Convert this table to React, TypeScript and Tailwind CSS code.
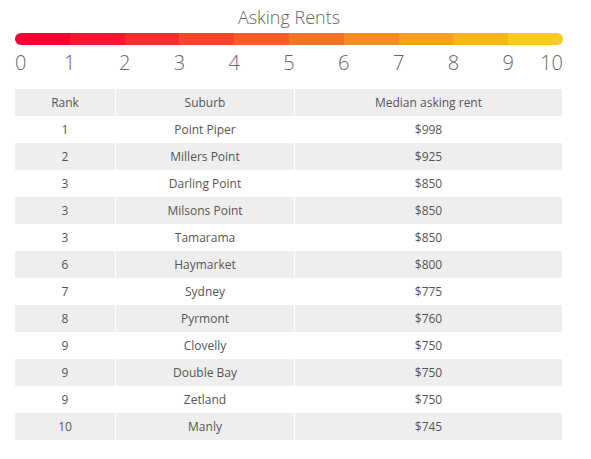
const segments = [
  "#f80132",
  "#f5172f",
  "#f42e2c",
  "#f4462a",
  "#f45d27",
  "#f47425",
  "#f58b23",
  "#f6a121",
  "#f7b620",
  "#f9ca21",
];

const rows = [
  ["1", "Point Piper", "$998"],
  ["2", "Millers Point", "$925"],
  ["3", "Darling Point", "$850"],
  ["3", "Milsons Point", "$850"],
  ["3", "Tamarama", "$850"],
  ["6", "Haymarket", "$800"],
  ["7", "Sydney", "$775"],
  ["8", "Pyrmont", "$760"],
  ["9", "Clovelly", "$750"],
  ["9", "Double Bay", "$750"],
  ["9", "Zetland", "$750"],
  ["10", "Manly", "$745"],
];

function Row({ cells, shaded }: { cells: string[]; shaded: boolean }) {
  const bg = shaded ? "bg-[#eeeeee]" : "bg-white";
  return (
    <div className="grid grid-cols-[100px_178px_267px] gap-x-px h-[27px]">
      {cells.map((c, i) => (
        <div key={i} className={`${bg} flex items-center justify-center`}>
          {c}
        </div>
      ))}
    </div>
  );
}

export default function App() {
  return (
    <div className="w-[591px] h-[459px] bg-white font-['Open_Sans',sans-serif] px-[15px] pt-[5px]">
      <div className="w-[548px] text-center text-[18px] leading-[24px] font-light text-[#666666]">
        Asking Rents
      </div>

      <div className="mt-[4px] w-[548px] h-[12px] rounded-full overflow-hidden flex">
        {segments.map((c) => (
          <div key={c} className="flex-1 h-full" style={{ backgroundColor: c }} />
        ))}
      </div>

      <div className="relative mt-[6px] w-[548px] h-[24px] text-[20px] leading-[24px] font-light text-[#666666]">
        {Array.from({ length: 11 }, (_, k) => {
          if (k === 0) return <span key={k} className="absolute left-0 top-0">0</span>;
          if (k === 10) return <span key={k} className="absolute right-0 top-0">10</span>;
          return (
            <span
              key={k}
              className="absolute top-0 -translate-x-1/2"
              style={{ left: `${k * 10}%` }}
            >
              {k}
            </span>
          );
        })}
      </div>

      <div className="mt-[14px] w-[547px] text-[12px] text-[#555555]">
        <Row cells={["Rank", "Suburb", "Median asking rent"]} shaded />
        {rows.map((r, i) => (
          <Row key={i} cells={r} shaded={i % 2 === 1} />
        ))}
      </div>
    </div>
  );
}
